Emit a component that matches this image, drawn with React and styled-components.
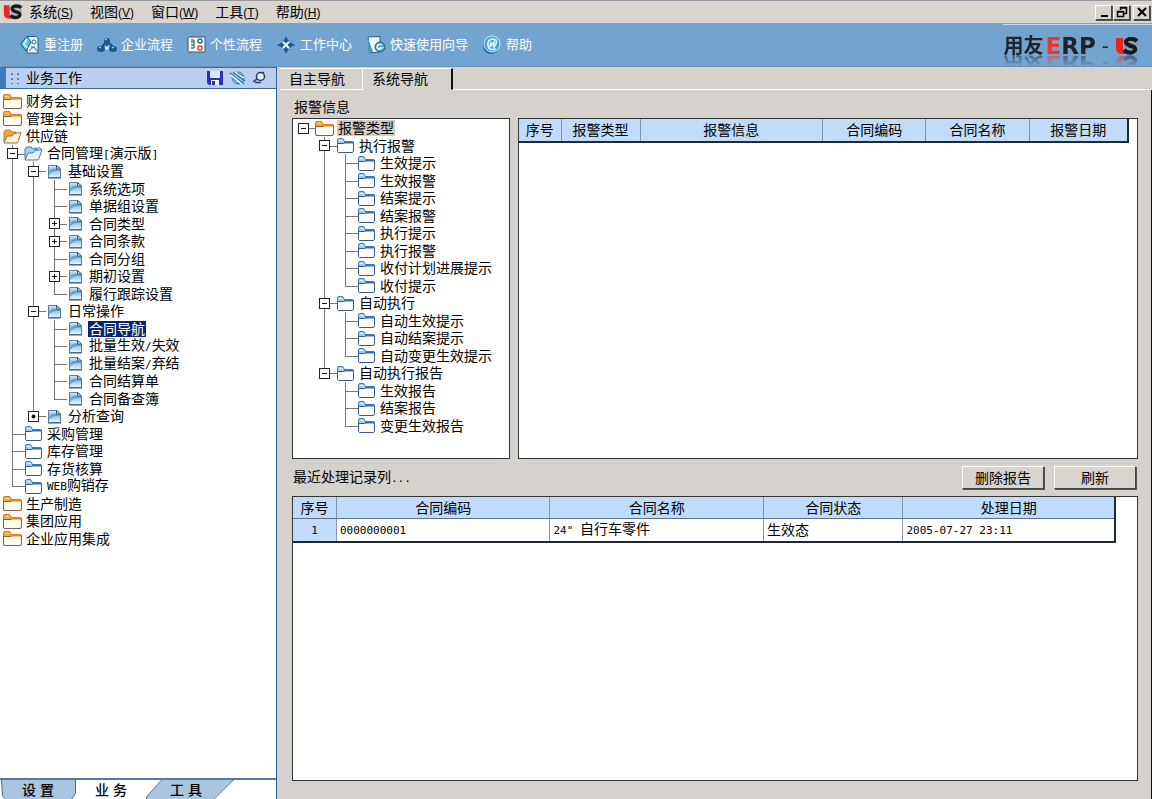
import React, { useState } from 'react';
import styled, { createGlobalStyle, css } from 'styled-components';

const menus = [
  { name: '系统', hotkey: 'S' },
  { name: '视图', hotkey: 'V' },
  { name: '窗口', hotkey: 'W' },
  { name: '工具', hotkey: 'T' },
  { name: '帮助', hotkey: 'H' },
];

// guides: v = 세로선, t = 분기, l = 마지막 분기, 공백 = 빈칸
// toggle: 노드의 펼침 버튼, 마지막 guide 위에 그려진다
const workTree = [
  { label: '财务会计', icon: 'orange', guides: '' },
  { label: '管理会计', icon: 'orange', guides: '' },
  { label: '供应链', icon: 'orangeOpen', guides: '' },
  { label: '合同管理[演示版]', icon: 'blueOpen', guides: 't', toggle: 'minus' },
  { label: '基础设置', icon: 'doc', guides: 'vt', toggle: 'minus' },
  { label: '系统选项', icon: 'doc', guides: 'vvt' },
  { label: '单据组设置', icon: 'doc', guides: 'vvt' },
  { label: '合同类型', icon: 'doc', guides: 'vvt', toggle: 'plus' },
  { label: '合同条款', icon: 'doc', guides: 'vvt', toggle: 'plus' },
  { label: '合同分组', icon: 'doc', guides: 'vvt' },
  { label: '期初设置', icon: 'doc', guides: 'vvt', toggle: 'plus' },
  { label: '履行跟踪设置', icon: 'doc', guides: 'vvl' },
  { label: '日常操作', icon: 'doc', guides: 'vt', toggle: 'minus' },
  { label: '合同导航', icon: 'doc', guides: 'vvt' },
  { label: '批量生效/失效', icon: 'doc', guides: 'vvt' },
  { label: '批量结案/弃结', icon: 'doc', guides: 'vvt' },
  { label: '合同结算单', icon: 'doc', guides: 'vvt' },
  { label: '合同备查簿', icon: 'doc', guides: 'vvl' },
  { label: '分析查询', icon: 'doc', guides: 'vl', toggle: 'dot' },
  { label: '采购管理', icon: 'blue', guides: 't' },
  { label: '库存管理', icon: 'blue', guides: 't' },
  { label: '存货核算', icon: 'blue', guides: 't' },
  { label: 'WEB购销存', icon: 'blue', guides: 'l' },
  { label: '生产制造', icon: 'orange', guides: '' },
  { label: '集团应用', icon: 'orange', guides: '' },
  { label: '企业应用集成', icon: 'orange', guides: '' },
];

const alertTree = [
  { label: '报警类型', icon: 'orange', guides: 'h', toggle: 'minus' },
  { label: '执行报警', icon: 'blue', guides: ' t', toggle: 'minus' },
  { label: '生效提示', icon: 'blue', guides: ' vt' },
  { label: '生效报警', icon: 'blue', guides: ' vt' },
  { label: '结案提示', icon: 'blue', guides: ' vt' },
  { label: '结案报警', icon: 'blue', guides: ' vt' },
  { label: '执行提示', icon: 'blue', guides: ' vt' },
  { label: '执行报警', icon: 'blue', guides: ' vt' },
  { label: '收付计划进展提示', icon: 'blue', guides: ' vt' },
  { label: '收付提示', icon: 'blue', guides: ' vl' },
  { label: '自动执行', icon: 'blue', guides: ' t', toggle: 'minus' },
  { label: '自动生效提示', icon: 'blue', guides: ' vt' },
  { label: '自动结案提示', icon: 'blue', guides: ' vt' },
  { label: '自动变更生效提示', icon: 'blue', guides: ' vl' },
  { label: '自动执行报告', icon: 'blue', guides: ' l', toggle: 'minus' },
  { label: '生效报告', icon: 'blue', guides: '  t' },
  { label: '结案报告', icon: 'blue', guides: '  t' },
  { label: '变更生效报告', icon: 'blue', guides: '  l' },
];

const alertColumns = [
  { title: '序号', width: '7%' },
  { title: '报警类型', width: '13%' },
  { title: '报警信息', width: '30%' },
  { title: '合同编码', width: '17%' },
  { title: '合同名称', width: '17%' },
  { title: '报警日期', width: '16%' },
];

const recordColumns = [
  { title: '序号', width: '44px' },
  { title: '合同编码', width: '26%' },
  { title: '合同名称', width: '26%' },
  { title: '合同状态', width: '17%' },
  { title: '处理日期', width: 'auto' },
];

const records = [['0000000001', '24" 自行车零件', '生效态', '2005-07-27 23:11']];

// 영문/숫자 부분만 반각 글꼴로 출력
const Mixed = ({ text }) =>
  text
    .split(/([\x20-\x7e]+)/)
    .filter(Boolean)
    .map((part, i) => (/^[\x20-\x7e]/.test(part) ? <Half key={i}>{part}</Half> : part));

const FolderIcon = ({ orange }) => (
  <svg width={orange ? 19 : 17} height="15" viewBox="0 0 18 15" preserveAspectRatio="none" aria-hidden="true">
    <path
      d="M0.5 13V2Q0.5 0.5 2 0.5H6L8 3.5H16.5V7H0.5Z"
      fill={orange ? '#ffa62b' : '#a5cdf2'}
      stroke={orange ? '#e07a1c' : '#3d76b4'}
    />
    <path d="M2 2.5H6" stroke={orange ? '#ffe0a0' : '#e2f2ff'} />
    <path
      d="M0.5 5.5H7L8.5 4.5H17.5V13L16.5 14.5H1.5L0.5 13.5Z"
      fill={orange ? '#fffdf2' : '#fbfdff'}
      stroke={orange ? '#7d6350' : '#31567f'}
    />
    <path d="M7.5 4.5H17.5" stroke={orange ? '#ec8420' : '#3572b4'} strokeWidth="2" />
  </svg>
);

const OpenFolderIcon = ({ orange }) => (
  <svg width="19" height="15" viewBox="0 0 19 15" aria-hidden="true">
    <path
      d="M1 13V3L2.5 1H7L8.5 3H13V6"
      fill={orange ? '#f5a637' : '#a7cef2'}
      stroke={orange ? '#cc7728' : '#3979bb'}
    />
    <path
      d="M1 14L4 7H9L11 4.5L18 3.5L15 12.5Q14.5 14 13 14Z"
      fill={orange ? '#fff4d8' : '#e4f2ff'}
      stroke={orange ? '#996b3c' : '#3979bb'}
    />
    {!orange && <path d="M10 3Q11 0 13 3Q15 0 17 3" fill="none" stroke="#3270b5" />}
  </svg>
);

const DocIcon = () => (
  <svg width="13" height="15" viewBox="0 0 13 15" aria-hidden="true">
    <defs>
      <linearGradient id="docFill" x1="0" y1="0" x2="0" y2="1">
        <stop offset="0" stopColor="#d4ecf8" />
        <stop offset="0.4" stopColor="#8dbfe0" />
        <stop offset="1" stopColor="#eef8ff" />
      </linearGradient>
    </defs>
    <path d="M0.5 1.5H8.5L12.5 5V13.5H0.5Z" fill="url(#docFill)" stroke="#56819f" />
    <path d="M1 9Q2 4 9 4.5L12 6V7Q5 6 1 11Z" fill="#4d92c2" opacity="0.7" />
    <path d="M8.5 1.5V5H12.5Z" fill="#f2fbff" stroke="#28597e" />
    <path d="M0 14H13" stroke="#2f5c82" />
  </svg>
);

const NodeIcon = ({ type }) => {
  if (type === 'doc') return <DocIcon />;
  if (type === 'orangeOpen' || type === 'blueOpen') return <OpenFolderIcon orange={type === 'orangeOpen'} />;
  return <FolderIcon orange={type === 'orange'} />;
};

const USMark = ({ width, height }) => (
  <svg width={width} height={height} viewBox="0 0 24 18" aria-hidden="true">
    <path d="M1 1H8V12Q8 15 11 17H8Q1 17 1 11Z" fill="#ea2424" />
    <ellipse cx="16" cy="9" rx="7" ry="8" fill="#8f9296" opacity="0.5" />
    <path
      d="M22 4Q19 1 14 2Q9 4 12 7Q15 9 19 10Q22 13 18 15Q13 17 9 13"
      fill="none"
      stroke="#17181a"
      strokeWidth="4"
    />
  </svg>
);

const toolbarItems = [
  {
    label: '重注册',
    icon: (
      <svg width="20" height="20" viewBox="0 0 20 20" aria-hidden="true">
        <path d="M7 1.5H16.5L18 3V18H7Z" fill="#e9f6fb" stroke="#235d88" />
        <path d="M0.5 9L7 1.5L11 7L6 16Z" fill="#5fc4e0" stroke="#165780" />
        <path d="M7 4L4 9L7 13" fill="none" stroke="#c9f4ff" strokeWidth="2" />
        <circle cx="14" cy="7" r="2" fill="none" stroke="#2b6991" />
        <path d="M9 16Q14 9 17 16M11 12H15" fill="none" stroke="#2b6991" />
      </svg>
    ),
  },
  {
    label: '企业流程',
    icon: (
      <svg width="20" height="20" viewBox="0 0 20 20" aria-hidden="true">
        <path d="M10 6L4 13M10 6L17 13M10 6V13" fill="none" stroke="#194f80" strokeWidth="2" />
        <circle cx="10" cy="6" r="3" fill="#1e598c" />
        <ellipse cx="4" cy="14" rx="4" ry="3" fill="#1e598c" />
        <ellipse cx="16" cy="14" rx="4" ry="3" fill="#1e598c" />
        <circle cx="10" cy="13" r="2" fill="#b9e7f5" />
        <path d="M8 5L10 4M2 13L4 12M15 13L17 12" stroke="#c7efff" />
      </svg>
    ),
  },
  {
    label: '个性流程',
    icon: (
      <svg width="19" height="20" viewBox="0 0 19 20" aria-hidden="true">
        <rect x="1" y="2" width="17" height="15" rx="1" fill="#f7fafb" stroke="#28587d" />
        <path d="M4 5H7V7H4M4 10H7M7 7V13H4" fill="none" stroke="#263d51" />
        <circle cx="13" cy="6" r="2" fill="none" stroke="#286589" strokeWidth="1.5" />
        <rect x="11" y="11" width="4" height="4" rx="1" fill="#fff0de" stroke="#d6492d" strokeWidth="1.5" />
      </svg>
    ),
  },
  {
    label: '工作中心',
    icon: (
      <svg width="20" height="20" viewBox="0 0 20 20" aria-hidden="true">
        <path d="M10 1L13 7L19 10L13 13L10 19L7 13L1 10L7 7Z" fill="#1f5b90" />
        <circle cx="10" cy="10" r="5" fill="none" stroke="#1f5b90" />
        <path d="M6 6L9 7V9H7ZM14 6L11 7V9H13ZM6 14L9 13V11H7ZM14 14L11 13V11H13Z" fill="#e4fbff" />
        <circle cx="10" cy="10" r="2" fill="#f5ffff" />
      </svg>
    ),
  },
  {
    label: '快速使用向导',
    icon: (
      <svg width="20" height="20" viewBox="0 0 20 20" aria-hidden="true">
        <path d="M2 2L14 1.5V17L4 18Z" fill="#f4fcff" stroke="#225b83" />
        <path d="M2 3L7 17L4 18L2 15Z" fill="#3f9bc0" />
        <circle cx="14" cy="12" r="5" fill="#4f9eb5" stroke="#205e78" />
        <path d="M16 10Q12 8 11 12Q12 16 16 13H13" fill="none" stroke="#e6fbff" strokeWidth="1.5" />
      </svg>
    ),
  },
  {
    label: '帮助',
    icon: (
      <svg width="20" height="20" viewBox="0 0 20 20" aria-hidden="true">
        <circle cx="9" cy="11" r="8" fill="#28699d" />
        <circle cx="10" cy="9" r="8" fill="#3fa5d5" stroke="#c4efff" />
        <path d="M14 14Q7 16 6 11Q5 5 10 4Q16 4 14 9L12 12L12 7L8 12L9 7" fill="none" stroke="#f2fdff" strokeWidth="1.5" />
      </svg>
    ),
  },
];

const Tree = ({ nodes, selected, onSelect, muted }) => (
  <TreeList>
    {nodes.map((node, index) => (
      <TreeRow key={index}>
        {[...node.guides].map((kind, i) => (
          <Guide key={i} $kind={kind}>
            {node.toggle && i === node.guides.length - 1 && (
              <Toggle aria-label={node.label}>
                <svg width="9" height="9" viewBox="0 0 9 9" aria-hidden="true">
                  {node.toggle !== 'dot' && <path d="M2 4.5H7" stroke="#111" />}
                  {node.toggle === 'plus' && <path d="M4.5 2V7" stroke="#111" />}
                  {node.toggle === 'dot' && <circle cx="4.5" cy="4.5" r="2" fill="#111" />}
                </svg>
              </Toggle>
            )}
          </Guide>
        ))}
        <IconBox>
          <NodeIcon type={node.icon} />
        </IconBox>
        <NodeLabel $selected={selected === index} $muted={muted} onClick={() => onSelect(index)}>
          <Mixed text={node.label} />
        </NodeLabel>
      </TreeRow>
    ))}
  </TreeList>
);

const App = () => {
  const [workNode, setWorkNode] = useState(13);
  const [alertNode, setAlertNode] = useState(0);

  return (
    <Window>
      <GlobalStyle />
      <MenuBar>
        <USMark width="20" height="16" />
        <Menus>
          {menus.map((menu) => (
            <MenuButton key={menu.name}>
              {menu.name}
              <Hotkey>
                (<u>{menu.hotkey}</u>)
              </Hotkey>
            </MenuButton>
          ))}
        </Menus>
        <WindowButtons>
          <WindowButton aria-label="最小化">
            <svg width="14" height="12" viewBox="0 0 14 12">
              <path d="M4 10H11" stroke="#000" strokeWidth="2" />
            </svg>
          </WindowButton>
          <WindowButton aria-label="还原">
            <svg width="14" height="12" viewBox="0 0 14 12">
              <path d="M5.5 4V1.5H11.5V7.5H9M5 2H12" fill="none" stroke="#000" strokeWidth="1.5" />
              <path d="M2.5 5.5H8.5V10.5H2.5ZM2 6H9" fill="none" stroke="#000" strokeWidth="1.5" />
            </svg>
          </WindowButton>
          <WindowButton $apart aria-label="关闭">
            <svg width="14" height="12" viewBox="0 0 14 12">
              <path d="M3 2L11 10M11 2L3 10" stroke="#000" strokeWidth="2" />
            </svg>
          </WindowButton>
        </WindowButtons>
      </MenuBar>

      <Toolbar>
        <Tools>
          {toolbarItems.map((item) => (
            <ToolButton key={item.label}>
              {item.icon}
              {item.label}
            </ToolButton>
          ))}
        </Tools>
        <Brand>
          <BrandText>
            <span>用友</span>
            <Erp>
              <em>E</em>RP
            </Erp>
            <Dash>-</Dash>
            <USMark width="24" height="18" />
          </BrandText>
        </Brand>
      </Toolbar>

      <Body>
        <Sidebar>
          <SideHeader>
            <svg width="10" height="12" viewBox="0 0 10 12" aria-hidden="true">
              <path d="M1 1V12M7 1V12" stroke="#657eae" strokeWidth="2" strokeDasharray="2 3" />
            </svg>
            <SideTitle>业务工作</SideTitle>
            <SideTool aria-label="保存">
              <svg width="16" height="16" viewBox="0 0 16 16">
                <path d="M0 1H16V15H2L0 13Z" fill="#2631bd" />
                <rect x="3" y="1" width="10" height="7" fill="#dfe8ff" />
                <rect x="4" y="10" width="8" height="5" fill="#eaf1ff" />
                <rect x="5" y="11" width="3" height="4" fill="#2631bd" />
              </svg>
            </SideTool>
            <SideTool aria-label="刷新">
              <svg width="17" height="16" viewBox="0 0 17 16">
                <circle cx="9" cy="8" r="6" fill="#9fd2ea" stroke="#3b7fac" />
                <path d="M1 3L15 14M4 2L16 11" stroke="#2e719f" strokeWidth="1.5" />
                <path d="M2 5L13 14M6 2L15 8" stroke="#e6f7ff" strokeWidth="1.5" />
                <path d="M4 9L10 14M9 3L14 6" stroke="#2e719f" />
              </svg>
            </SideTool>
            <SideTool aria-label="固定">
              <svg width="14" height="16" viewBox="0 0 14 16">
                <circle cx="8.5" cy="6.5" r="4" fill="#e4eefb" stroke="#223e63" strokeWidth="1.5" />
                <path d="M1 12L5 9M3 12.5H9M11 3L12 2" stroke="#223e63" strokeWidth="1.5" />
              </svg>
            </SideTool>
          </SideHeader>
          <SideBody>
            <Tree nodes={workTree} selected={workNode} onSelect={setWorkNode} />
          </SideBody>
          <SideTabs>
            <SideTab $shape="left">设 置</SideTab>
            <SideTab $shape="plain">业 务</SideTab>
            <SideTab $shape="right">工 具</SideTab>
          </SideTabs>
        </Sidebar>

        <Main>
          <Tabs>
            <Tab>自主导航</Tab>
            <Tab $active>系统导航</Tab>
          </Tabs>
          <Content>
            <Caption>报警信息</Caption>
            <AlertArea>
              <Panel>
                <Tree nodes={alertTree} selected={alertNode} onSelect={setAlertNode} muted />
              </Panel>
              <Panel $gap={8}>
                <Table>
                  <colgroup>
                    {alertColumns.map((col) => (
                      <Col key={col.title} $width={col.width} />
                    ))}
                  </colgroup>
                  <thead>
                    <tr>
                      {alertColumns.map((col) => (
                        <HeadCell key={col.title}>{col.title}</HeadCell>
                      ))}
                    </tr>
                  </thead>
                </Table>
              </Panel>
            </AlertArea>
            <RecordBar>
              <span>
                <Mixed text="最近处理记录列..." />
              </span>
              <PushButton>删除报告</PushButton>
              <PushButton>刷新</PushButton>
            </RecordBar>
            <Panel $gap={21}>
              <Table>
                <colgroup>
                  {recordColumns.map((col) => (
                    <Col key={col.title} $width={col.width} />
                  ))}
                </colgroup>
                <thead>
                  <tr>
                    {recordColumns.map((col) => (
                      <HeadCell key={col.title}>{col.title}</HeadCell>
                    ))}
                  </tr>
                </thead>
                <tbody>
                  {records.map((record, i) => (
                    <tr key={record[0]}>
                      <HeadCell scope="row">
                        <Mixed text={String(i + 1)} />
                      </HeadCell>
                      {record.map((value) => (
                        <Cell key={value}>
                          <Mixed text={value} />
                        </Cell>
                      ))}
                    </tr>
                  ))}
                </tbody>
              </Table>
            </Panel>
          </Content>
        </Main>
      </Body>
    </Window>
  );
};

export default App;

// Styled-components 정의
const GlobalStyle = createGlobalStyle`
  * {
    box-sizing: border-box;
  }

  body {
    margin: 0;
    color: #000;
    background: #d5d2cd;
  }

  body, button, table {
    font-family: 'Liberation Sans', 'Noto Sans CJK SC', sans-serif;
    font-size: 14px;
    line-height: 16px;
  }

  button {
    margin: 0;
    padding: 0;
    border: none;
    background: none;
    color: inherit;
  }

  svg {
    display: block;
    flex-shrink: 0;
  }
`;

const Window = styled.div`
  display: flex;
  flex-direction: column;
  min-height: 100vh;
`;

const MenuBar = styled.header`
  display: flex;
  align-items: center;
  height: 23px;
  padding: 0 2px 0 3px;
  border-top: 1px solid #96989b;
  background: #d9d5cf;
`;

const Menus = styled.nav`
  display: flex;
  flex: 1;
  gap: 17px;
  margin-left: 6px;
`;

const MenuButton = styled.button`
  white-space: nowrap;
`;

const Hotkey = styled.span`
  font-size: 12px;
`;

const WindowButtons = styled.div`
  display: flex;
`;

const raised = css`
  border: 1px solid;
  border-color: #fff #45423f #45423f #fff;
  box-shadow: 1px 1px 0 #55524f;
  background: #d7d3cd;
`;

const WindowButton = styled.button`
  ${raised}
  display: flex;
  align-items: center;
  justify-content: center;
  width: 17px;
  height: 15px;
  margin-left: ${(props) => (props.$apart ? '3px' : '1px')};
`;

const Toolbar = styled.div`
  display: flex;
  justify-content: space-between;
  height: 44px;
  padding-left: 20px;
  border-bottom: 1px solid #6d93b8;
  background: #73a4d0;
`;

const Tools = styled.div`
  display: flex;
  align-items: center;
  gap: 14px;
`;

const ToolButton = styled.button`
  display: flex;
  align-items: center;
  gap: 4px;
  font-size: 13px;
  color: #fff;
  white-space: nowrap;
`;

const Brand = styled.div`
  display: flex;
  align-items: center;
  margin-top: 1px;
  padding-right: 13px;
  border-top: 1px solid #c5ddf1;
  overflow: hidden;
`;

const BrandText = styled.div`
  display: flex;
  align-items: center;
  height: 18px;
  font-size: 20px;
  font-weight: 700;
  line-height: 18px;
  color: #20242a;
  -webkit-box-reflect: below 0 linear-gradient(transparent 30%, rgba(0, 0, 0, 0.5));
`;

const Erp = styled.span`
  margin-left: 2px;
  font-family: 'DejaVu Sans', sans-serif;
  font-size: 23px;

  em {
    font-style: normal;
    color: #f0352b;
  }
`;

const Dash = styled.span`
  margin: 0 6px;
  font-family: 'DejaVu Sans', sans-serif;
  font-weight: 400;
`;

const Body = styled.div`
  display: flex;
  flex: 1;
`;

const Sidebar = styled.aside`
  display: flex;
  flex-direction: column;
  flex: 0 0 277px;
  border-right: 1px solid #315f9b;
  background: #fff;
`;

const SideHeader = styled.div`
  display: flex;
  align-items: center;
  gap: 6px;
  height: 22px;
  padding: 0 10px 0 5px;
  border: solid #416a9c;
  border-width: 1px 0 1px 6px;
  border-left-color: #3c78be;
  background: #bacff0;
`;

const SideTitle = styled.span`
  flex: 1;
  margin-left: -1px;
`;

const SideTool = styled.button`
  display: flex;
`;

const SideBody = styled.div`
  flex: 1;
  padding: 3px 0 0 2px;
`;

const SideTabs = styled.div`
  display: flex;
  height: 21px;
  border-top: 2px solid #58799d;
`;

const tabShapes = {
  left: css`
    width: 76px;

    &, &::before {
      clip-path: polygon(1px 0, 100% 0, 100% 70%, 95% 100%, 7% 100%, 2px 85%);
    }
  `,
  plain: css`
    width: 70px;
  `,
  right: css`
    width: 88px;
    padding-right: 8px;

    &, &::before {
      clip-path: polygon(17% 0, 100% 0, 78% 100%, 0 100%, 0 90%);
    }
  `,
};

// 테두리 색 위에 1px 안쪽으로 같은 모양을 채운다
const SideTab = styled.button`
  position: relative;
  isolation: isolate;
  font-weight: 500;
  background: ${(props) => (props.$shape === 'plain' ? 'none' : '#466d91')};

  &::before {
    content: '';
    position: absolute;
    z-index: -1;
    inset: 0 1px;
    background: ${(props) => (props.$shape === 'plain' ? 'none' : '#a9c5e0')};
  }

  ${(props) => tabShapes[props.$shape]}
`;

const TreeList = styled.ul`
  margin: 0;
  padding: 0;
  list-style: none;
`;

const TreeRow = styled.li`
  display: flex;
  align-items: center;
  height: 17px;

  &:nth-child(odd) {
    height: 18px;
  }
`;

const guideHeights = { v: '100%', t: '100%', l: '50%' };

const Guide = styled.span`
  position: relative;
  display: flex;
  align-items: center;
  justify-content: center;
  align-self: stretch;
  flex: 0 0 21px;

  &::before {
    content: '';
    position: absolute;
    top: 0;
    left: 10px;
    width: 1px;
    height: ${(props) => guideHeights[props.$kind] || 0};
    background: #777;
  }

  &::after {
    content: '';
    position: absolute;
    top: 50%;
    left: 10px;
    right: -2px;
    height: ${(props) => ('tlh'.includes(props.$kind) ? '1px' : 0)};
    background: #777;
  }
`;

const Toggle = styled.button`
  position: relative;
  z-index: 1;
  width: 11px;
  height: 11px;
  border: 1px solid #222;
  background: #fff;
`;

const IconBox = styled.span`
  display: flex;
  justify-content: center;
  flex: 0 0 21px;
`;

const NodeLabel = styled.button`
  margin-left: 2px;
  padding: 0 1px;
  white-space: nowrap;

  ${(props) =>
    props.$selected &&
    (props.$muted
      ? css`
          background: #d0cdca;
        `
      : css`
          background: #0b246a;
          color: #fff;
        `)}
`;

const Half = styled.span`
  font-family: 'DejaVu Sans Mono', monospace;
  font-size: 11px;
`;

const Main = styled.main`
  display: flex;
  flex-direction: column;
  flex: 1;
  min-width: 0;
  padding-left: 3px;
  background: #d5d2cd;
`;

const Tabs = styled.div`
  display: flex;
  height: 23px;
  padding-top: 1px;

  &::after {
    content: '';
    flex: 1;
    border-bottom: 1px solid #fff;
  }
`;

const Tab = styled.button`
  padding: 0 17px 0 9px;
  border: solid #fff;
  border-width: 1px 1px 1px 0;

  ${(props) =>
    props.$active &&
    css`
      padding-right: 23px;
      border-right: 2px solid #111;
      border-bottom-color: transparent;
    `}
`;

const Content = styled.div`
  display: grid;
  grid-template-rows: 28px 6fr 37px 5fr;
  flex: 1;
  padding: 0 13px 18px 12px;
  border-right: 1px solid #111;
`;

const Caption = styled.div`
  align-self: center;
  padding: 5px 0 0 2px;
`;

const AlertArea = styled.div`
  display: grid;
  grid-template-columns: 218px 1fr;
  gap: 8px;
`;

const Panel = styled.section`
  padding-right: ${(props) => props.$gap || 0}px;
  border: 1px solid #333;
  background: #fff;
`;

const RecordBar = styled.div`
  display: flex;
  align-items: center;
  gap: 10px;
  padding: 0 2px 0 1px;

  span:first-child {
    flex: 1;
  }
`;

const PushButton = styled.button`
  ${raised}
  width: 82px;
  height: 23px;
`;

const Table = styled.table`
  width: 100%;
  table-layout: fixed;
  border-spacing: 0;
  border: solid #1d2937;
  border-width: 0 2px 2px 0;
`;

const Col = styled.col`
  width: ${(props) => props.$width};
`;

const Cell = styled.td`
  height: 22px;
  padding: 0 3px;
  border-right: 1px solid #8d969f;
  white-space: nowrap;

  &:last-child {
    border-right: none;
  }
`;

const HeadCell = styled.th`
  height: 22px;
  padding: 0;
  border-right: 1px solid #8096ac;
  background: #c0dcfa;
  font-weight: 400;

  &:last-child {
    border-right: none;
  }

  thead:has(+ tbody) & {
    border-bottom: 1px solid #5c7088;
  }
`;
